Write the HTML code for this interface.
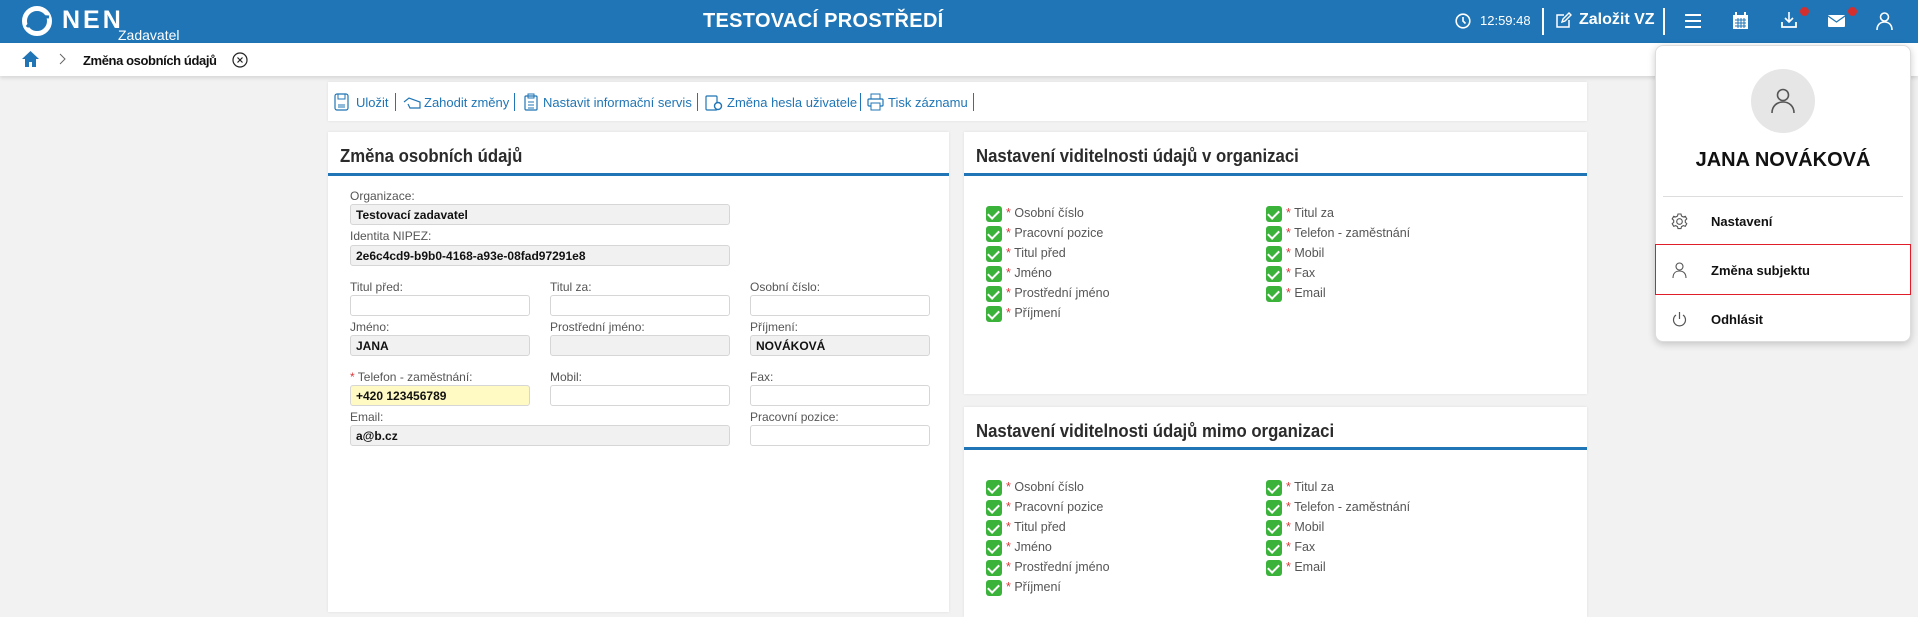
<!DOCTYPE html>
<html><head><meta charset="utf-8"><style>
*{box-sizing:border-box;margin:0;padding:0}
body{width:1918px;height:602px;overflow:hidden;background:#f2f2f2;font-family:"Liberation Sans",Arial,sans-serif;position:relative}
.a{position:absolute;white-space:nowrap}
.hdr{left:0;top:0;width:1918px;height:43px;background:#1f75b5}
.bc{left:0;top:43px;width:1918px;height:33px;background:#fff;box-shadow:0 2px 4px rgba(0,0,0,.12)}
.panel{background:#fff;box-shadow:0 0 3px rgba(0,0,0,.08)}
.tb{font-size:13px;color:#1f75b5;top:95px}
.sep{width:1px;height:18px;background:#1f75b5;top:93px}
.ttl{font-size:18px;color:#2b2b2b;font-weight:bold;transform:scaleX(.93);transform-origin:left}
.bl{height:3px;background:#1f75b5}
.lb{font-size:12px;color:#555}
.in{border:1px solid #d6d6d6;border-radius:3px;background:#fff;height:21px;font-size:12px;font-weight:bold;color:#111;padding:3px 0 0 5px}
.g{background:#f1f1f1}
.y{background:#fff9c4}
.cb{width:16px;height:16px;border-radius:3px;background:#3bb33b}
.cb:after{content:"";position:absolute;left:4px;top:2px;width:5px;height:9px;border:solid #fff;border-width:0 2.5px 2.5px 0;transform:rotate(45deg)}
.ct{font-size:12.5px;color:#555}
.ct b{color:#d9393b;font-weight:normal}
.dd{left:1655px;top:45px;width:256px;height:297px;background:#fff;border:1px solid #ddd;border-radius:8px;box-shadow:0 2px 8px rgba(0,0,0,.2)}
.mi{font-size:13px;font-weight:bold;color:#111}
</style></head><body>
<div class="a hdr"></div>
<svg class="a" style="left:21px;top:5px" width="32" height="32" viewBox="0 0 32 32"><circle cx="16" cy="16" r="12.5" fill="none" stroke="#fff" stroke-width="5"/><path d="M6 22 Q14 10 28 12" stroke="#1f75b5" stroke-width="3" fill="none"/></svg>
<div class="a" style="left:62px;top:6px;font-size:25px;font-weight:bold;color:#fff;letter-spacing:3px">NEN</div>
<div class="a" style="left:118px;top:27px;font-size:14px;color:#fff">Zadavatel</div>
<div class="a" style="left:703px;top:10px;font-size:20px;font-weight:bold;color:#fff;letter-spacing:.3px">TESTOVACÍ PROSTŘEDÍ</div>
<svg class="a" style="left:1455px;top:13px" width="16" height="16" viewBox="0 0 16 16"><circle cx="8" cy="8" r="6.8" fill="none" stroke="#fff" stroke-width="1.6"/><path d="M8 4v4l2.5 2.5" stroke="#fff" stroke-width="1.6" fill="none"/></svg>
<div class="a" style="left:1480px;top:13px;font-size:13px;color:#fff">12:59:48</div>
<div class="a" style="left:1542px;top:8px;width:2px;height:27px;background:#fff"></div>
<svg class="a" style="left:1555px;top:12px" width="17" height="17" viewBox="0 0 17 17"><path d="M9 3H2v12h12V8" fill="none" stroke="#fff" stroke-width="1.5"/><path d="M7 10l1-3 6-6 2 2-6 6z" fill="none" stroke="#fff" stroke-width="1.4"/></svg>
<div class="a" style="left:1579px;top:11px;font-size:16px;font-weight:bold;color:#fff">Založit VZ</div>
<div class="a" style="left:1663px;top:8px;width:2px;height:27px;background:#fff"></div>
<svg class="a" style="left:1685px;top:13px" width="16" height="16"><path d="M0 2h16M0 8h16M0 14h16" stroke="#fff" stroke-width="2"/></svg>
<svg class="a" style="left:1733px;top:12px" width="15" height="17" viewBox="0 0 15 17"><rect x="0" y="3" width="15" height="14" fill="#fff"/><path d="M3 0v4M12 0v4" stroke="#fff" stroke-width="2"/><path d="M2 8h11M2 11h11M2 14h11M5 6v10M8 6v10M11 6v10" stroke="#1f75b5" stroke-width="1"/></svg>
<svg class="a" style="left:1781px;top:12px" width="16" height="16"><path d="M8 0v9M4 6l4 4 4-4" stroke="#fff" stroke-width="1.6" fill="none"/><path d="M1 10v5h14v-5" stroke="#fff" stroke-width="1.8" fill="none"/></svg>
<div class="a" style="left:1800px;top:7px;width:9px;height:9px;border-radius:50%;background:#d32f2f"></div>
<svg class="a" style="left:1828px;top:15px" width="17" height="12"><rect width="17" height="12" rx="1" fill="#fff"/><path d="M0 1l8.5 6 8.5-6" stroke="#1f75b5" stroke-width="1.3" fill="none"/></svg>
<div class="a" style="left:1848px;top:7px;width:9px;height:9px;border-radius:50%;background:#d32f2f"></div>
<svg class="a" style="left:1876px;top:12px" width="17" height="18"><circle cx="8.5" cy="5" r="4" fill="none" stroke="#fff" stroke-width="1.6"/><path d="M1 18c0-5 3-8 7.5-8s7.5 3 7.5 8" fill="none" stroke="#fff" stroke-width="1.6"/></svg>

<div class="a bc"></div>
<svg class="a" style="left:22px;top:51px" width="17" height="16"><path d="M8.5 0L0 8h3v8h4v-5h3v5h4V8h3z" fill="#1f75b5"/></svg>
<svg class="a" style="left:59px;top:53px" width="7" height="12"><path d="M1 1l5 5-5 5" stroke="#666" fill="none"/></svg>
<div class="a" style="left:83px;top:53px;font-size:13px;font-weight:bold;color:#111;letter-spacing:-.4px">Změna osobních údajů</div>
<svg class="a" style="left:232px;top:52px" width="16" height="16"><circle cx="8" cy="8" r="7" fill="none" stroke="#222" stroke-width="1.2"/><path d="M5.5 5.5l5 5M10.5 5.5l-5 5" stroke="#222" stroke-width="1.2"/></svg>

<div class="a panel" style="left:328px;top:82px;width:1259px;height:39px"></div>
<svg class="a" style="left:334px;top:93px" width="15" height="18"><rect x="1" y="1" width="13" height="16" rx="2" fill="none" stroke="#1f75b5" stroke-width="1.2"/><path d="M4 1v5h7V1M4 12h7M4 14h7" stroke="#1f75b5" fill="none"/></svg>
<div class="a tb" style="left:356px">Uložit</div><div class="a sep" style="left:395px"></div>
<svg class="a" style="left:403px;top:96px" width="18" height="13"><path d="M1 6l5-4 11 4v6H7L5 8" stroke="#1f75b5" stroke-width="1.2" fill="none"/></svg>
<div class="a tb" style="left:424px">Zahodit změny</div><div class="a sep" style="left:514px"></div>
<svg class="a" style="left:524px;top:93px" width="14" height="18"><rect x="1" y="3" width="12" height="14" rx="1" fill="none" stroke="#1f75b5" stroke-width="1.2"/><path d="M4 1h6v4H4zM4 9h6M4 12h6M4 15h6" stroke="#1f75b5" fill="none"/></svg>
<div class="a tb" style="left:543px">Nastavit informační servis</div><div class="a sep" style="left:697px"></div>
<svg class="a" style="left:705px;top:93px" width="18" height="18"><rect x="1" y="3" width="11" height="14" rx="1" fill="none" stroke="#1f75b5" stroke-width="1.2"/><circle cx="13" cy="13" r="3.5" fill="#fff" stroke="#1f75b5" stroke-width="1.4"/></svg>
<div class="a tb" style="left:727px">Změna hesla uživatele</div><div class="a sep" style="left:860px"></div>
<svg class="a" style="left:867px;top:93px" width="17" height="18"><rect x="4" y="1" width="9" height="5" fill="none" stroke="#1f75b5"/><rect x="1" y="6" width="15" height="7" rx="1" fill="none" stroke="#1f75b5" stroke-width="1.2"/><rect x="4" y="10" width="9" height="7" fill="#fff" stroke="#1f75b5"/></svg>
<div class="a tb" style="left:888px">Tisk záznamu</div><div class="a sep" style="left:973px"></div>

<div class="a panel" style="left:328px;top:132px;width:621px;height:480px"></div>
<div class="a ttl" style="left:340px;top:146px">Změna osobních údajů</div>
<div class="a bl" style="left:328px;top:173px;width:621px"></div>
<div class="a lb" style="left:350px;top:189px">Organizace:</div>
<div class="a in g" style="left:350px;top:204px;width:380px">Testovací zadavatel</div>
<div class="a lb" style="left:350px;top:229px">Identita NIPEZ:</div>
<div class="a in g" style="left:350px;top:245px;width:380px">2e6c4cd9-b9b0-4168-a93e-08fad97291e8</div>
<div class="a lb" style="left:350px;top:280px">Titul před:</div>
<div class="a lb" style="left:550px;top:280px">Titul za:</div>
<div class="a lb" style="left:750px;top:280px">Osobní číslo:</div>
<div class="a in" style="left:350px;top:295px;width:180px"></div>
<div class="a in" style="left:550px;top:295px;width:180px"></div>
<div class="a in" style="left:750px;top:295px;width:180px"></div>
<div class="a lb" style="left:350px;top:320px">Jméno:</div>
<div class="a lb" style="left:550px;top:320px">Prostřední jméno:</div>
<div class="a lb" style="left:750px;top:320px">Příjmení:</div>
<div class="a in g" style="left:350px;top:335px;width:180px">JANA</div>
<div class="a in g" style="left:550px;top:335px;width:180px"></div>
<div class="a in g" style="left:750px;top:335px;width:180px">NOVÁKOVÁ</div>
<div class="a lb" style="left:350px;top:370px"><span style="color:#d9393b">*</span> Telefon - zaměstnání:</div>
<div class="a lb" style="left:550px;top:370px">Mobil:</div>
<div class="a lb" style="left:750px;top:370px">Fax:</div>
<div class="a in y" style="left:350px;top:385px;width:180px">+420 123456789</div>
<div class="a in" style="left:550px;top:385px;width:180px"></div>
<div class="a in" style="left:750px;top:385px;width:180px"></div>
<div class="a lb" style="left:350px;top:410px">Email:</div>
<div class="a lb" style="left:750px;top:410px">Pracovní pozice:</div>
<div class="a in g" style="left:350px;top:425px;width:380px">a@b.cz</div>
<div class="a in" style="left:750px;top:425px;width:180px"></div>

<div class="a panel" style="left:964px;top:132px;width:623px;height:262px"></div>
<div class="a ttl" style="left:976px;top:146px">Nastavení viditelnosti údajů v organizaci</div>
<div class="a bl" style="left:964px;top:173px;width:623px"></div>
<div class="a panel" style="left:964px;top:407px;width:623px;height:210px"></div>
<div class="a ttl" style="left:976px;top:421px">Nastavení viditelnosti údajů mimo organizaci</div>
<div class="a bl" style="left:964px;top:447px;width:623px"></div>

<div id="lists"></div>
<script>
var c1=["Osobní číslo","Pracovní pozice","Titul před","Jméno","Prostřední jméno","Příjmení"],c2=["Titul za","Telefon - zaměstnání","Mobil","Fax","Email"],h="";
[206,480].forEach(function(t){
c1.forEach(function(s,i){h+='<div class="a cb" style="left:986px;top:'+(t+i*20)+'px"></div><div class="a ct" style="left:1006px;top:'+(t+i*20)+'px"><b>*</b> '+s+'</div>';});
c2.forEach(function(s,i){h+='<div class="a cb" style="left:1266px;top:'+(t+i*20)+'px"></div><div class="a ct" style="left:1286px;top:'+(t+i*20)+'px"><b>*</b> '+s+'</div>';});
});
document.getElementById("lists").innerHTML=h;
</script>

<div class="a dd"></div>
<div class="a" style="left:1751px;top:69px;width:64px;height:64px;border-radius:50%;background:#e6e6e6"></div>
<svg class="a" style="left:1771px;top:88px" width="24" height="26"><circle cx="12" cy="7" r="5.5" fill="none" stroke="#555" stroke-width="1.6"/><path d="M1 25c0-7 5-11 11-11s11 4 11 11" fill="none" stroke="#555" stroke-width="1.6"/></svg>
<div class="a" style="left:1655px;width:256px;text-align:center;top:149px;font-size:20px;font-weight:bold;color:#111">JANA NOVÁKOVÁ</div>
<div class="a" style="left:1663px;top:196px;width:240px;height:1px;background:#ddd"></div>
<svg class="a" style="left:1671px;top:213px" width="17" height="17" viewBox="0 0 17 17"><circle cx="8.5" cy="8.5" r="2.8" fill="none" stroke="#555" stroke-width="1.1"/><path d="M7 1h3l.5 2 1.8 1 2-.7 1.5 2.6-1.5 1.4v2l1.5 1.4-1.5 2.6-2-.7-1.8 1-.5 2H7l-.5-2-1.8-1-2 .7-1.5-2.6 1.5-1.4v-2L1.2 5.9l1.5-2.6 2 .7 1.8-1z" fill="none" stroke="#555" stroke-width="1.1"/></svg>
<div class="a mi" style="left:1711px;top:214px">Nastavení</div>
<div class="a" style="left:1655px;top:244px;width:256px;height:51px;border:1.5px solid #e01e2b"></div>
<svg class="a" style="left:1672px;top:262px" width="15" height="16"><circle cx="7.5" cy="4.5" r="3.5" fill="none" stroke="#555" stroke-width="1.1"/><path d="M1 16c0-5 3-7 6.5-7s6.5 2 6.5 7" fill="none" stroke="#555" stroke-width="1.1"/></svg>
<div class="a mi" style="left:1711px;top:263px">Změna subjektu</div>
<svg class="a" style="left:1672px;top:311px" width="15" height="16"><path d="M7.5 1v7" stroke="#555" stroke-width="1.2"/><path d="M4 4a6 6 0 1 0 7 0" fill="none" stroke="#555" stroke-width="1.2"/></svg>
<div class="a mi" style="left:1711px;top:312px">Odhlásit</div>
</body></html>
